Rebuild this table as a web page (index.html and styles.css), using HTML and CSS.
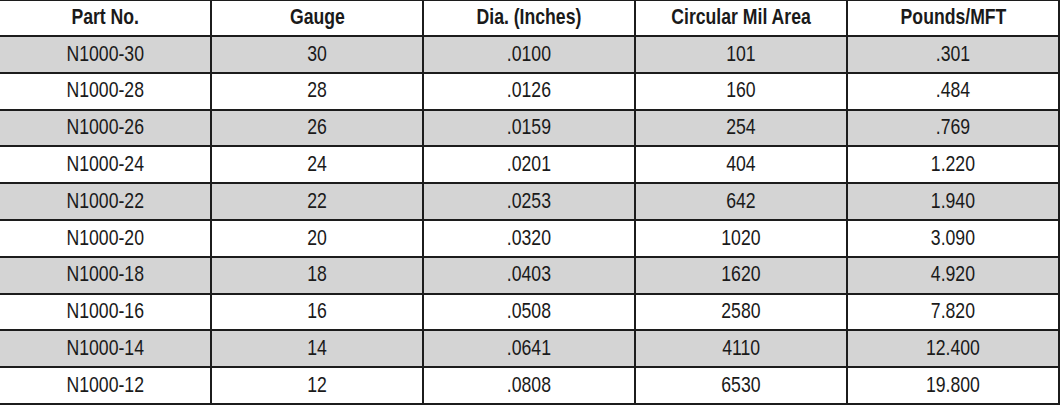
FILE: index.html
```html
<!DOCTYPE html>
<html>
<head>
<meta charset="utf-8">
<link rel="stylesheet" href="styles.css">
</head>
<body>
<table class="wire">
  <thead>
    <tr><th><span class="nar">Part No.</span></th><th><span class="nar">Gauge</span></th><th><span class="nar">Dia. (Inches)</span></th><th><span class="nar">Circular Mil Area</span></th><th><span class="nar">Pounds/MFT</span></th></tr>
  </thead>
  <tbody>
    <tr class="alt"><td><span class="nar">N1000-30</span></td><td><span class="nar">30</span></td><td><span class="nar">.0100</span></td><td><span class="nar">101</span></td><td><span class="nar">.301</span></td></tr>
    <tr><td><span class="nar">N1000-28</span></td><td><span class="nar">28</span></td><td><span class="nar">.0126</span></td><td><span class="nar">160</span></td><td><span class="nar">.484</span></td></tr>
    <tr class="alt"><td><span class="nar">N1000-26</span></td><td><span class="nar">26</span></td><td><span class="nar">.0159</span></td><td><span class="nar">254</span></td><td><span class="nar">.769</span></td></tr>
    <tr><td><span class="nar">N1000-24</span></td><td><span class="nar">24</span></td><td><span class="nar">.0201</span></td><td><span class="nar">404</span></td><td><span class="nar">1.220</span></td></tr>
    <tr class="alt"><td><span class="nar">N1000-22</span></td><td><span class="nar">22</span></td><td><span class="nar">.0253</span></td><td><span class="nar">642</span></td><td><span class="nar">1.940</span></td></tr>
    <tr><td><span class="nar">N1000-20</span></td><td><span class="nar">20</span></td><td><span class="nar">.0320</span></td><td><span class="nar">1020</span></td><td><span class="nar">3.090</span></td></tr>
    <tr class="alt"><td><span class="nar">N1000-18</span></td><td><span class="nar">18</span></td><td><span class="nar">.0403</span></td><td><span class="nar">1620</span></td><td><span class="nar">4.920</span></td></tr>
    <tr><td><span class="nar">N1000-16</span></td><td><span class="nar">16</span></td><td><span class="nar">.0508</span></td><td><span class="nar">2580</span></td><td><span class="nar">7.820</span></td></tr>
    <tr class="alt"><td><span class="nar">N1000-14</span></td><td><span class="nar">14</span></td><td><span class="nar">.0641</span></td><td><span class="nar">4110</span></td><td><span class="nar">12.400</span></td></tr>
    <tr><td><span class="nar">N1000-12</span></td><td><span class="nar">12</span></td><td><span class="nar">.0808</span></td><td><span class="nar">6530</span></td><td><span class="nar">19.800</span></td></tr>
  </tbody>
</table>
</body>
</html>
```
FILE: styles.css
```css
html, body {
  margin: 0;
  padding: 0;
  background: #ffffff;
}
.wire {
  border-collapse: collapse;
  table-layout: fixed;
  width: 1062px;
  margin-left: -2px;
  margin-top: -1px;
  font-family: "Liberation Sans", Arial, sans-serif;
  font-size: 21.5px;
  color: #1a1a1a;
}
.wire th,
.wire td {
  border: 2px solid #1c1c1c;
  text-align: center;
  padding: 0;
  line-height: 1;
}
.nar {
  display: inline-block;
  white-space: nowrap;
  transform: scaleX(0.82);
}
.wire th {
  font-weight: bold;
  height: 34px;
}
.wire td {
  height: 34.8px;
}
.wire tr.alt td {
  background: #d4d4d4;
}
```
